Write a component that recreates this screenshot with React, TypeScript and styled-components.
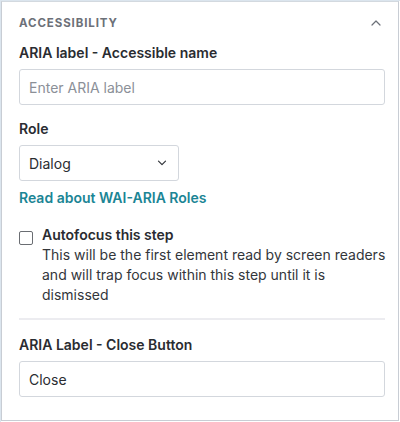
import React from 'react';
import styled, { createGlobalStyle } from 'styled-components';

const GlobalStyle = createGlobalStyle`
  html, body {
    margin: 0;
    padding: 0;
    background: #ffffff;
  }
  body {
    font-family: Inter, "Noto Sans", sans-serif;
    -webkit-font-smoothing: antialiased;
  }
`;

const Frame = styled.div`
  width: 399px;
  height: 421px;
  border-top: 1px solid #dbe5ee;
  border-left: 1px solid #dbe5ee;
`;

const Panel = styled.section`
  box-sizing: border-box;
  width: 398px;
  height: 420px;
  border: 1px solid #c8cdd4;
  border-top-color: #d3d9df;
  padding: 11px 13px 0 17px;
  color: #2a2c31;
`;

const Header = styled.div`
  display: flex;
  align-items: center;
  justify-content: space-between;
  height: 20px;
  padding-right: 4px;
`;

const HeaderTitle = styled.span`
  font-size: 11.5px;
  font-weight: 700;
  letter-spacing: 0.9px;
  color: #6c7078;
`;

const Field = styled.div<{ $top: number }>`
  display: flex;
  flex-direction: column;
  margin-top: ${(p) => p.$top}px;
`;

const Label = styled.label`
  font-size: 14px;
  font-weight: 600;
  line-height: 20px;
  color: #2a2c31;
`;

const TextInput = styled.input`
  box-sizing: border-box;
  margin-top: 6px;
  width: 366px;
  height: 36px;
  padding: 0 9px;
  border: 1px solid #d3d7dd;
  border-radius: 3px;
  font-family: Inter, "Noto Sans", sans-serif;
  font-size: 14px;
  color: #2a2c31;
  outline: none;

  &::placeholder {
    color: #8b9098;
  }
`;

const SelectBox = styled.div`
  box-sizing: border-box;
  margin-top: 6px;
  width: 160px;
  height: 36px;
  padding: 0 11px 0 9px;
  display: flex;
  align-items: center;
  justify-content: space-between;
  border: 1px solid #d3d7dd;
  border-radius: 3px;
  font-size: 14px;
  color: #2a2c31;
`;

const Link = styled.a`
  display: block;
  margin-top: 7px;
  font-size: 14px;
  font-weight: 600;
  line-height: 20px;
  color: #1b8595;
  text-decoration: none;
`;

const CheckRow = styled.div`
  display: flex;
  align-items: flex-start;
  gap: 9px;
  margin-top: 17px;
`;

const Checkbox = styled.span`
  flex: none;
  box-sizing: border-box;
  width: 14px;
  height: 14px;
  margin-top: 6px;
  border: 1px solid #6a6d72;
  border-radius: 2px;
`;

const CheckText = styled.div`
  flex: 1;
  display: flex;
  flex-direction: column;
  margin-right: -8px;
`;

const CheckTitle = styled.span`
  font-size: 14px;
  font-weight: 600;
  line-height: 20px;
  color: #2a2c31;
`;

const CheckDesc = styled.span`
  font-size: 14px;
  line-height: 20px;
  color: #33363b;
`;

const Divider = styled.hr`
  margin: 13px 0 0;
  width: 366px;
  border: none;
  border-top: 2px solid #ececf0;
`;

const Chevron = ({ up }: { up?: boolean }) => (
  <svg width={10} height={10} viewBox="0 0 10 10" fill="none">
    <path
      d={up ? 'M1 7 5 3 9 7' : 'M1.5 3.2 5 6.7 8.5 3.2'}
      stroke={up ? '#6c7078' : '#33363b'}
      strokeWidth="1.2"
      strokeLinecap="round"
      strokeLinejoin="round"
    />
  </svg>
);

export default function App() {
  return (
    <>
      <GlobalStyle />
      <Frame>
        <Panel>
          <Header>
            <HeaderTitle>ACCESSIBILITY</HeaderTitle>
            <Chevron up />
          </Header>

          <Field $top={10}>
            <Label>ARIA label - Accessible name</Label>
            <TextInput placeholder="Enter ARIA label" />
          </Field>

          <Field $top={14}>
            <Label>Role</Label>
            <SelectBox>
              <span>Dialog</span>
              <Chevron />
            </SelectBox>
          </Field>

          <Link href="#">Read about WAI-ARIA Roles</Link>

          <CheckRow>
            <Checkbox />
            <CheckText>
              <CheckTitle>Autofocus this step</CheckTitle>
              <CheckDesc>
                This will be the first element read by screen readers and will
                trap focus within this step until it is dismissed
              </CheckDesc>
            </CheckText>
          </CheckRow>

          <Divider />

          <Field $top={15}>
            <Label>ARIA Label - Close Button</Label>
            <TextInput defaultValue="Close" />
          </Field>
        </Panel>
      </Frame>
    </>
  );
}
